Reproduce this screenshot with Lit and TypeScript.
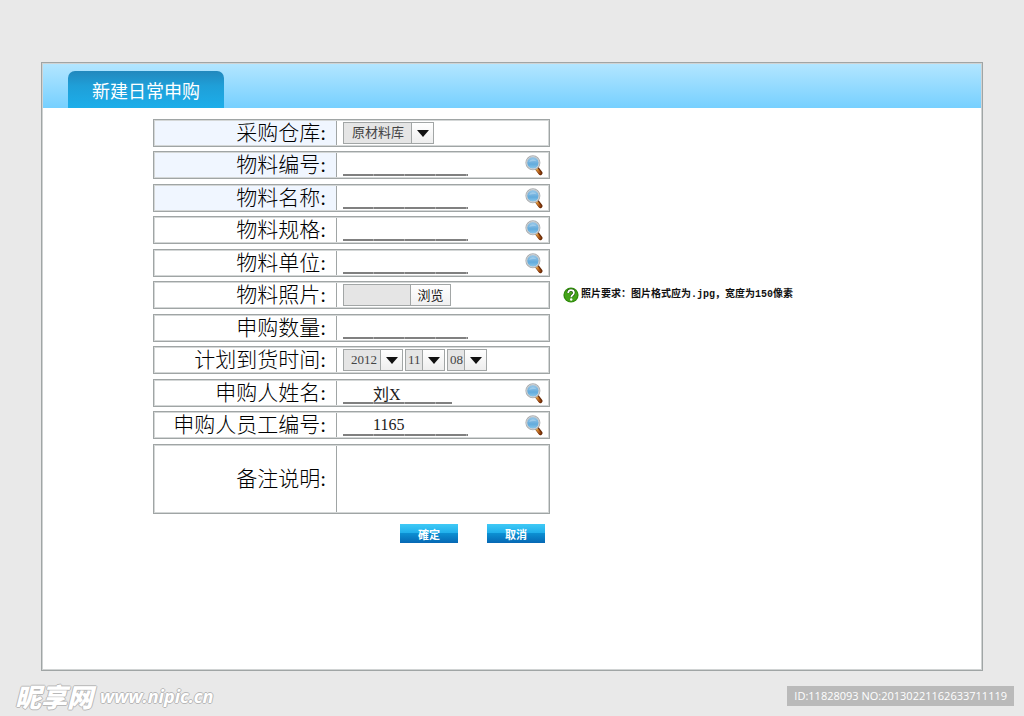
import { LitElement, html, css, nothing } from "lit";
import { customElement, property } from "lit/decorators.js";

interface Field {
  id: string;
  label: string;
  kind: "select" | "text" | "file" | "date" | "note";
  tinted?: boolean;
  search?: boolean;
  value?: string;
  short?: boolean;
  hint?: boolean;
}

const FIELDS: Field[] = [
  { id: "warehouse", label: "采购仓库", kind: "select", tinted: true },
  { id: "code", label: "物料编号", kind: "text", tinted: true, search: true },
  { id: "name", label: "物料名称", kind: "text", tinted: true, search: true },
  { id: "spec", label: "物料规格", kind: "text", search: true },
  { id: "unit", label: "物料单位", kind: "text", search: true },
  { id: "photo", label: "物料照片", kind: "file", hint: true },
  { id: "amount", label: "申购数量", kind: "text" },
  { id: "year", label: "计划到货时间", kind: "date" },
  { id: "person", label: "申购人姓名", kind: "text", search: true, value: "刘X", short: true },
  { id: "staff", label: "申购人员工编号", kind: "text", search: true, value: "1165" },
  { id: "note", label: "备注说明", kind: "note" },
];

@customElement("search-icon")
class SearchIcon extends LitElement {
  static styles = css`
    :host { display: block; width: 18px; height: 21px; }
    svg { display: block; }
  `;
  render() {
    return html`<svg width="18" height="21" viewBox="0 0 18 21" aria-hidden="true">
      <defs>
        <linearGradient id="glass" x1="0" y1="0" x2="0" y2="1">
          <stop offset="0" stop-color="#9dcbea" />
          <stop offset="0.45" stop-color="#74b3df" />
          <stop offset="0.6" stop-color="#62abdc" />
          <stop offset="1" stop-color="#92cdee" />
        </linearGradient>
        <linearGradient id="grip" x1="0" y1="0" x2="1" y2="1">
          <stop offset="0" stop-color="#e8a040" />
          <stop offset="1" stop-color="#a04a10" />
        </linearGradient>
      </defs>
      <path d="M11 12.6 L12.4 14.4" stroke="#8c8c8c" stroke-width="2.4" />
      <path d="M12.2 13.8 L15.4 18" stroke="#6d2d08" stroke-width="4.2" stroke-linecap="round" />
      <path d="M11.8 14.1 L14.7 17.9" stroke="url(#grip)" stroke-width="2.4" stroke-linecap="round" />
      <circle cx="7.9" cy="7.8" r="6.7" fill="url(#glass)" stroke="#a9adb0" stroke-width="1.6" />
      <circle cx="7.9" cy="7.8" r="6.2" fill="none" stroke="#d2d6d9" stroke-width="1" />
      <path d="M4 7 A4.3 4.3 0 0 1 11.6 6.2 Q7.8 5.8 4 7Z" fill="#d8ecf8" opacity="0.35" />
    </svg>`;
  }
}

@customElement("drop-down")
class DropDown extends LitElement {
  @property() name = "";
  @property() value = "";
  static styles = css`
    :host { display: block; }
    .box {
      display: grid;
      grid-template-columns: 1fr 22px;
      height: 22px;
      box-sizing: border-box;
      border: 1px solid #a2a6a6;
    }
    select {
      grid-area: 1 / 1 / 2 / 3;
      appearance: none;
      width: 100%;
      height: 100%;
      margin: 0;
      padding: 0 22px 0 var(--inset, 2px);
      border: 0;
      border-radius: 0;
      background: #e5e5e5;
      color: #444;
      font: 13px/18px "Liberation Serif", "Noto Sans CJK SC", serif;
    }
    .arrow {
      grid-area: 1 / 2;
      z-index: 1;
      pointer-events: none;
      display: grid;
      place-items: center;
      border-left: 1px solid #a2a6a6;
      background: linear-gradient(#fff, #eee);
    }
  `;
  render() {
    return html`<div class="box">
      <select aria-label=${this.name}><option>${this.value}</option></select>
      <span class="arrow"><svg width="12" height="7" viewBox="0 0 12 7"><path d="M0 0H12L6 7Z" fill="#111" /></svg></span>
    </div>`;
  }
}

@customElement("app-root")
class AppRoot extends LitElement {
  static styles = css`
    :host {
      display: flex;
      flex-direction: column;
      min-height: 100vh;
      box-sizing: border-box;
      background: #e9e9e9;
      color: #111;
      font-family: "Liberation Serif", "Noto Sans CJK SC", serif;
    }
    .panel {
      flex: 1;
      margin: 62px 41px 0;
      box-sizing: border-box;
      border: 1px solid #a0a5a5;
      outline: 1px solid #d0d3d3;
      outline-offset: -2px;
      background: #fff;
    }
    .bar {
      display: flex;
      align-items: flex-end;
      height: 45px;
      padding-left: 26px;
      background: linear-gradient(#b4e6ff, #76d0ff);
    }
    .tab {
      margin: 0;
      height: 37px;
      width: 156px;
      border-radius: 7px 7px 0 0;
      background: linear-gradient(#2288bd, #1f9fd8 40%, #1caeea);
      color: #fff;
      text-align: center;
      font: 18px/38px "Noto Sans CJK SC", sans-serif;
    }
    form { padding: 11px 0 24px 111px; }
    .field { display: flex; align-items: center; margin-bottom: 4px; }
    .field:nth-child(even) { margin-bottom: 5px; }
    .box {
      display: grid;
      grid-template-columns: 182px 1fr;
      width: 397px;
      min-height: 28px;
      box-sizing: border-box;
      border: 1px solid #a0a5a5;
      outline: 1px solid #d4d7d7;
      outline-offset: -2px;
    }
    .note { min-height: 70px; }
    .name {
      display: flex;
      align-items: center;
      justify-content: flex-end;
      padding-right: 10px;
      color: #000;
      font-size: 21px;
      font-weight: 300;
      line-height: 26px;
    }
    .tinted { background: #f0f6ff; }
    .value {
      display: flex;
      align-items: center;
      gap: 2px;
      padding: 0 6px;
      border-left: 1px solid #a0a5a5;
    }
    .line {
      width: 125px;
      height: 22px;
      box-sizing: border-box;
      padding: 0 0 0 30px;
      border: 0;
      background: repeating-linear-gradient(90deg, #808080 0 30px, #a8a8a8 30px 31px) 0 100% / 100% 2px no-repeat;
      color: #1a1a1a;
      font: 16px/20px "Liberation Serif", "Noto Sans CJK SC", serif;
    }
    .short { width: 109px; }
    .find { margin: 0 0 0 auto; padding: 0; border: 0; background: none; }
    .wide { width: 91px; --inset: 8px; }
    .year { width: 60px; --inset: 7px; }
    .part { width: 40px; }
    .file { display: flex; height: 22px; width: 108px; box-sizing: border-box; border: 1px solid #a2a6a6; }
    .path { flex: 1; min-width: 0; padding: 0; border: 0; background: #e5e5e5; }
    .browse {
      width: 40px;
      padding: 0;
      border: 0;
      border-left: 1px solid #a2a6a6;
      background: linear-gradient(#fff, #f0f0f0);
      color: #1a1a1a;
      font: 13px/18px "Noto Sans CJK SC", sans-serif;
    }
    textarea {
      flex: 1;
      align-self: stretch;
      min-width: 0;
      padding: 4px 0;
      border: 0;
      background: none;
      resize: none;
      font: 16px/20px "Liberation Serif", "Noto Sans CJK SC", serif;
    }
    .hint {
      display: flex;
      align-items: center;
      gap: 2px;
      margin-left: 13px;
      color: #111;
      font: bold 10px/16px "Liberation Mono", "Noto Sans CJK SC", sans-serif;
      white-space: nowrap;
    }
    .actions {
      display: flex;
      justify-content: flex-end;
      gap: 29px;
      width: 397px;
      box-sizing: border-box;
      padding: 6px 5px 0 0;
    }
    .action {
      width: 58px;
      height: 19px;
      padding: 0;
      border: 0;
      background: linear-gradient(#3fcaf6, #22b0ec 45%, #0c8fd2 50%, #0668b4);
      color: #fff;
      font: bold 11px/16px "Noto Sans CJK SC", sans-serif;
    }
    footer {
      display: flex;
      align-items: center;
      justify-content: space-between;
      height: 45px;
      padding: 5px 10px 0 15px;
      box-sizing: border-box;
    }
    .brand {
      display: flex;
      align-items: center;
      gap: 7px;
      color: #fff;
      text-decoration: none;
      font: italic bold 18px/24px "Open Sans", sans-serif;
      text-shadow: 1px 0 #b8b8b8, -1px 0 #b8b8b8, 0 1px #b8b8b8, 0 -1px #b8b8b8;
    }
    .logo { font: italic 900 26px/24px "Noto Sans CJK SC", sans-serif; }
    .serial {
      padding: 0 7px;
      background: #bababa;
      color: #fff;
      font: 11px/20px "Open Sans", sans-serif;
      white-space: nowrap;
    }
  `;

  control(f: Field) {
    switch (f.kind) {
      case "select":
        return html`<drop-down class="wide" id=${f.id} name=${f.label} value="原材料库"></drop-down>`;
      case "date":
        return html`<drop-down class="year" id=${f.id} name="年" value="2012"></drop-down>
          <drop-down class="part" name="月" value="11"></drop-down>
          <drop-down class="part" name="日" value="08"></drop-down>`;
      case "file":
        return html`<span class="file"><input class="path" id=${f.id} type="text" /><button class="browse" type="button">浏览</button></span>`;
      case "note":
        return html`<textarea id=${f.id}></textarea>`;
      default:
        return html`<input class="line ${f.short ? "short" : ""}" id=${f.id} type="text" .value=${f.value ?? ""} />`;
    }
  }

  hint() {
    return html`<div class="hint">
      <svg width="16" height="16" viewBox="0 0 16 16" aria-hidden="true">
        <circle cx="8" cy="8" r="7.6" fill="#2f8a0c" />
        <circle cx="8" cy="8" r="6.4" fill="#45a31a" />
        <path d="M5.2 6 Q5.2 3.2 8 3.2 Q10.9 3.2 10.9 5.7 Q10.9 7.2 9.3 8.2 Q8.3 8.9 8.3 10.2" fill="none" stroke="#174a05" stroke-width="3" />
        <path d="M5.2 6 Q5.2 3.2 8 3.2 Q10.9 3.2 10.9 5.7 Q10.9 7.2 9.3 8.2 Q8.3 8.9 8.3 10.2" fill="none" stroke="#fff" stroke-width="1.8" />
        <circle cx="8.2" cy="12.5" r="1.2" fill="#fff" />
      </svg>
      <span>照片要求：图片格式应为.jpg，宽度为150像素</span>
    </div>`;
  }

  render() {
    return html`
      <main class="panel">
        <header class="bar"><h1 class="tab">新建日常申购</h1></header>
        <form @submit=${(e: Event) => e.preventDefault()}>
          <div>
            ${FIELDS.map(
              (f) => html`<div class="field">
                <div class="box ${f.kind === "note" ? "note" : ""}">
                  <label class="name ${f.tinted ? "tinted" : ""}" for=${f.id}>${f.label}:</label>
                  <div class="value">
                    ${this.control(f)}
                    ${f.search
                      ? html`<button class="find" type="button" aria-label="查找${f.label}"><search-icon></search-icon></button>`
                      : nothing}
                  </div>
                </div>
                ${f.hint ? this.hint() : nothing}
              </div>`
            )}
          </div>
          <div class="actions">
            <button class="action" type="submit">確定</button>
            <button class="action" type="button">取消</button>
          </div>
        </form>
      </main>
      <footer>
        <a class="brand" href="#"><span class="logo">昵享网</span><span>www.nipic.cn</span></a>
        <span class="serial">ID:11828093 NO:20130221162633711119</span>
      </footer>
    `;
  }
}
